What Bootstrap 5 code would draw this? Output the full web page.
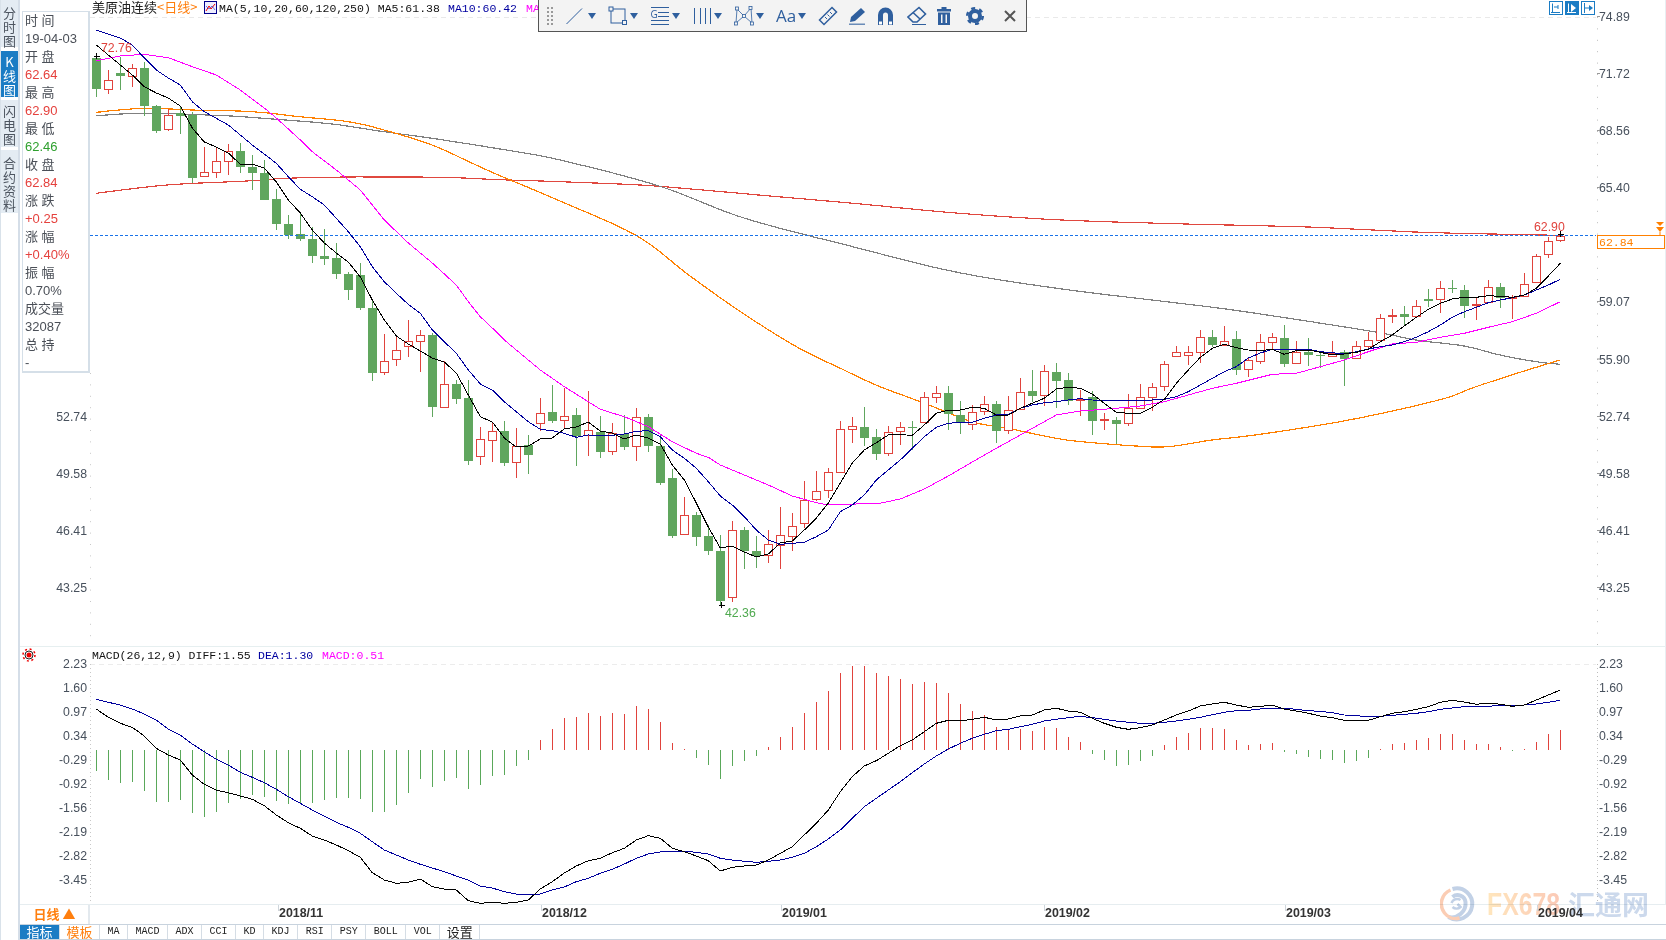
<!DOCTYPE html>
<html lang="zh-CN">
<head>
  <meta charset="UTF-8" />
  <meta name="viewport" content="width=device-width, initial-scale=1.0" />
  <title>美原油连续 日线</title>
  <link href="https://cdn.jsdelivr.net/npm/bootstrap@5.3.3/dist/css/bootstrap.min.css" rel="stylesheet"/>
  <style>
    body {
      width: 1666px;
      height: 940px;
      overflow: hidden;
      background: #fff;
      font-family: "Liberation Sans", "Noto Sans CJK SC", sans-serif;
    }
    .page-shell { height: 940px; }
    .side-col {
      width: 20px;
      flex: none;
      border-left: 1px solid #d9e2ea;
      border-right: 2px solid #d5dee8;
    }
    .side-tab {
      background: #e4ecf3;
      color: #4d5560;
      font: 13px/14px "Noto Sans CJK SC", sans-serif;
      text-align: center;
      margin-bottom: 3px;
      height: 47px;
      padding-top: 4px;
    }
    .side-tab.is-on { background: #1b7cc4; color: #fff; height: 46px; }
    .side-tab.first { padding-top: 6px; margin-bottom: 4px; }
    .side-tab.tall { height: 63px; padding-top: 6px; }
    .chart-box { height: 904px; }
    .chart-box > svg { display: block; }
    .ax { font: 12.3px "Liberation Sans", sans-serif; fill: #47505c; }
    .mono { font: 11.5px "Liberation Mono", monospace; }
    .cjk { font: 13px "Noto Sans CJK SC", sans-serif; }
    .peak { font: 12.3px "Liberation Sans", sans-serif; }

    .quote-panel {
      position: absolute;
      left: 2px;
      top: 11px;
      width: 68px;
      height: 362px;
      background: #fff;
      border: 1px solid #d5dfe8;
      border-width: 1px 2px 2px 1px;
      padding-left: 2px;
      font: 13px/18px "Liberation Sans", "Noto Sans CJK SC", sans-serif;
      color: #4a4f57;
    }
    .quote-panel .up { color: #e5413d; }
    .quote-panel .down { color: #2ea02e; }

    .draw-toolbar {
      position: absolute;
      left: 518px;
      top: 0;
      width: 489px;
      height: 32px;
      background: #f3f3f3;
      border: 1px solid #555;
      border-top: 0;
      padding-left: 8px;
    }
    .draw-toolbar svg { display: block; flex: none; }
    .grip { margin-right: 13px; }
    .tool-drop { width: 42px; flex: none; gap: 1px; }
    .tool-one { width: 29.500px; flex: none; }
    .tool-close { margin-left: 9px; }
    .caret-down {
      width: 0;
      height: 0;
      margin-left: 1px;
      border-left: 4px solid transparent;
      border-right: 4px solid transparent;
      border-top: 6px solid #2f5f9e;
    }
    .aa-mark {
      width: 20px;
      font: 17px/20px "Open Sans", sans-serif;
      color: #2f5f9e;
      white-space: nowrap;
    }
    .range-btns { position: absolute; right: 71px; top: 1px; column-gap: 2px; }

    .period-row { height: 20px; border-top: 1px solid #e6edf0; }
    .period-btn {
      width: 69px;
      margin-left: 1px;
      border: 1px solid #e3e9ee;
      border-width: 0 2px 0 0;
      color: #ff7f0e;
      font: bold 13px/18px "Noto Sans CJK SC", sans-serif;
      text-align: center;
    }
    .date-axis { position: relative; flex-grow: 1; z-index: 2; }
    .date-tag {
      position: absolute;
      top: 0;
      font: bold 12.4px/17px "Liberation Sans", sans-serif;
      color: #333;
    }
    .date-tag::before {
      content: "";
      position: absolute;
      left: -1px;
      top: 0;
      height: 6px;
      border-left: 1px solid #cfd6dc;
    }
    .ind-tabs {
      height: 16px;
      border-top: 1px solid #c8d3de;
      border-bottom: 1px solid #c8d3de;
    }
    .ind-tab {
      padding: 0 7.500px;
      border-right: 1px solid #d5dde5;
      font: 10px/14px "Liberation Mono", monospace;
      color: #222;
      height: 14px;
    }
    .ind-tab.zh { font: 13px/14px "Noto Sans CJK SC", sans-serif; padding: 0 6.500px; }
    .ind-tab.blue { background: #1b7cc4; color: #fff; }
    .ind-tab.orange { color: #ff7f0e; }
    .watermark {
      position: absolute;
      left: 1440px;
      top: 884px;
      mix-blend-mode: multiply;
      z-index: 1;
    }
  </style>
</head>
<body>
  <div class="page-shell d-flex position-relative">
    <div class="side-col">
      <div class="side-tab first">分<br>时<br>图</div>
      <div class="side-tab is-on">K<br>线<br>图</div>
      <div class="side-tab">闪<br>电<br>图</div>
      <div class="side-tab tall">合<br>约<br>资<br>料</div>
    </div>

    <div class="flex-grow-1 d-flex flex-column">
      <div class="chart-box position-relative">
        <svg id="chart" width="1646" height="904" viewBox="20 0 1646 904"></svg>

        <div class="quote-panel" id="quote"></div>

        <div class="draw-toolbar d-flex align-items-center">
          <svg class="grip" width="6" height="18" viewBox="0 0 6 18" fill="#999">
            <rect x="0" y="0" width="2" height="2"/><rect x="4" y="0" width="2" height="2"/>
            <rect x="0" y="4" width="2" height="2"/><rect x="4" y="4" width="2" height="2"/>
            <rect x="0" y="8" width="2" height="2"/><rect x="4" y="8" width="2" height="2"/>
            <rect x="0" y="12" width="2" height="2"/><rect x="4" y="12" width="2" height="2"/>
            <rect x="0" y="16" width="2" height="2"/><rect x="4" y="16" width="2" height="2"/>
          </svg>
          <div class="tool-drop d-flex align-items-center">
            <svg width="20" height="20" viewBox="0 0 20 20"><line x1="0.5" y1="18" x2="16" y2="2.5" stroke="#2f5f9e"/></svg>
            <span class="caret-down"></span>
          </div>
          <div class="tool-drop d-flex align-items-center">
            <svg width="20" height="20" viewBox="0 0 20 20" fill="#f3f3f3" stroke="#2f5f9e"><rect x="3" y="3" width="14" height="14"/><rect x="1" y="1" width="4" height="4"/><rect x="14.500" y="14.500" width="4" height="4"/></svg>
            <span class="caret-down"></span>
          </div>
          <div class="tool-drop d-flex align-items-center">
            <svg width="20" height="20" viewBox="0 0 20 20" stroke="#2f5f9e"><path d="M1 1.500h18M8 6.500h11M8 10.500h11M1 14.500h18M1 18.500h18"/><text x="0.500" y="12" fill="#2f5f9e" stroke="none" font-family="Open Sans" font-size="10">G</text></svg>
            <span class="caret-down"></span>
          </div>
          <div class="tool-drop d-flex align-items-center">
            <svg width="20" height="20" viewBox="0 0 20 20" stroke="#2f5f9e"><path d="M2.500 2v16M8.500 2v16M13.500 2v16M18.500 2v16"/></svg>
            <span class="caret-down"></span>
          </div>
          <div class="tool-drop d-flex align-items-center">
            <svg width="20" height="20" viewBox="0 0 20 20" fill="#f3f3f3" stroke="#2f5f9e" stroke-width="0.800"><path d="M3 3L10 10L17 2L18 17L10 10L2 17Z"/><rect x="1.500" y="1" width="3" height="3"/><rect x="15" y="0.500" width="3" height="3"/><rect x="8.500" y="8.500" width="3" height="3"/><rect x="0.500" y="16" width="3" height="3"/><rect x="16.500" y="16" width="3" height="3"/></svg>
            <span class="caret-down"></span>
          </div>
          <div class="tool-drop d-flex align-items-center">
            <span class="aa-mark">Aa</span>
            <span class="caret-down"></span>
          </div>
          <div class="tool-one">
            <svg width="20" height="20" viewBox="0 0 20 20" fill="none" stroke="#2f5f9e" stroke-width="1.500"><path d="M14 1.500L18.500 6L6 18.500L1.500 14Z"/><path d="M12 6l2 2M9.500 8.500l2 2M7 11l2 2" stroke-width="1"/></svg>
          </div>
          <div class="tool-one">
            <svg width="20" height="20" viewBox="0 0 20 20" fill="#2f5f9e"><path d="M13 2l4 4L7 15l-5 1 1-5z"/><rect x="1" y="17.500" width="16" height="1.500" opacity="0.700"/></svg>
          </div>
          <div class="tool-one">
            <svg width="20" height="20" viewBox="0 0 20 20"><path d="M1 19V9a7.500 7.500 0 0 1 15 0v10h-5V9a2.500 2.500 0 0 0-5 0v10z" fill="#2f5f9e"/><rect x="2" y="15.500" width="3" height="3" fill="#fff"/><rect x="12" y="15.500" width="3" height="3" fill="#fff"/></svg>
          </div>
          <div class="tool-one">
            <svg width="20" height="20" viewBox="0 0 20 20" fill="none" stroke="#2f5f9e" stroke-width="1.600"><path d="M12 1.500L18.500 8L10 16H6L1 11Z"/><path d="M6 6.500L13 13" /><path d="M5 18.500h14" stroke-width="1"/></svg>
          </div>
          <div class="tool-one">
            <svg width="20" height="20" viewBox="0 0 20 20" fill="#2f5f9e"><rect x="1" y="3" width="14" height="2.500"/><rect x="5.500" y="1" width="5" height="2.500"/><path d="M2 6.500h12v12.500H2zM5 8.500v8.500h1.500V8.500zM9.500 8.500v8.500H11V8.500z" fill-rule="evenodd"/></svg>
          </div>
          <div class="tool-one">
            <svg width="20" height="20" viewBox="0 0 20 20" fill="none" stroke="#2f5f9e"><circle cx="9" cy="10" r="5" stroke-width="4"/><circle cx="9" cy="10" r="7.800" stroke-width="2.500" stroke-dasharray="4 4.170"/></svg>
          </div>
          <div class="tool-close">
            <svg width="12" height="12" viewBox="0 0 12 12" stroke="#555" stroke-width="2"><path d="M1 1l10 10M11 1L1 11"/></svg>
          </div>
        </div>

        <div class="range-btns d-flex">
          <svg width="14" height="14" viewBox="0 0 14 14" fill="none" stroke="#1b7cc4"><rect x="0.500" y="0.500" width="13" height="13"/><path d="M3.500 2.500v9M2 11.500h9M9 4v4M5 6h4"/></svg>
          <svg width="14" height="14" viewBox="0 0 14 14"><rect width="14" height="14" fill="#1b7cc4"/><path d="M3.500 2.500v9M2 11.500h9" stroke="#fff" fill="none"/><path d="M6 3l5 4-5 4z" fill="#fff"/></svg>
          <svg width="14" height="14" viewBox="0 0 14 14" fill="none" stroke="#1b7cc4"><rect x="0.500" y="0.500" width="13" height="13"/><path d="M3.500 2v10M3.500 7h6"/><path d="M8 4l4 3-4 3z" fill="#1b7cc4" stroke="none"/></svg>
        </div>
      </div>

      <div class="period-row d-flex">
        <div class="period-btn">日线 ▲</div>
        <div class="date-axis" id="dates"></div>
      </div>

      <div class="ind-tabs d-flex" id="indTabs"></div>
    </div>

    <svg class="watermark" width="215" height="40" viewBox="1440 884 215 40">
      <defs>
        <linearGradient id="wm" x1="0" x2="1" y1="0" y2="0"><stop offset="0" stop-color="#ffe6bd"/><stop offset="1" stop-color="#fbc9b6"/></linearGradient>
      </defs>
      <g transform="translate(1456.500 904)">
        <path d="M-4 -15A15.500 15.500 0 1 1 -8 13A14 14 0 0 0 9 -2A8 8 0 0 0 -4 -7" fill="none" stroke="#c2d1e6" stroke-width="4"/>
        <path d="M-6 -14A15 15 0 0 0 -12 9A14 14 0 0 0 3 14" fill="none" stroke="#fbcdb4" stroke-width="3.500"/>
        <path d="M-5 -1a6 6 0 0 1 9 -3M-4 3a6 6 0 0 0 8 0l-3 -3" fill="none" stroke="#c2d1e6" stroke-width="2.500"/>
      </g>
      <text x="1487" y="915" fill="url(#wm)" font-family="Liberation Sans" font-weight="bold" font-size="32" textLength="73" lengthAdjust="spacingAndGlyphs">FX678</text>
      <text x="1568" y="915" fill="#ccd9ec" font-family="Noto Sans CJK SC" font-weight="bold" font-size="27">汇通网</text>
    </svg>
  </div>

  <script>
    // main chart: every y is page pixels, bars sit 12px apart starting at x=96.3
    const X0 = 96.3, STEP = 12;
    const xOf = i => X0 + STEP * i;

    const g = "g", r = "r";
    const candles = [
      [g,55,58,89,97],[r,70,80.3,88.7,93.7],[g,56.7,73,75.7,90],[r,64,68.3,75.7,86.7],[g,62,68,105.7,115.7],
      [g,105,106,130.7,132.7],[r,109,115.3,128.7,130.7],[g,107,113.3,115.7,134],[g,112.3,114.7,177.7,182.7],[r,147,172.3,175.7,176.7],
      [r,147.3,161.3,172.3,177.7],[r,144,150.7,161.3,174.7],[g,143,151,166.7,173],[g,155,167,173,189.7],[g,160,173,199.7,200],
      [g,189,199,223.7,230],[g,215,224,235.3,239],[g,212.3,234,238.7,240.7],[g,226.7,239,256,262.7],[g,229,256,258.7,265],
      [g,243.3,258,273.7,278.7],[g,272.3,274,289.7,299.7],[g,263.3,275,307.7,309.7],[g,300,308,372.7,380.7],[r,334,360.7,372.3,374.7],
      [r,335,350.3,358.7,365.7],[r,320,341.3,345.7,356.7],[r,330,335.3,340.7,372],[g,333.3,335,407,417],[r,361.3,384.3,406.7,406.7],
      [g,380,384,398.7,404],[g,380,398,460.7,465],[r,427,439.3,456.3,465],[r,423.3,431.3,439.7,462],[g,421,431,462.7,466],
      [r,428,446.3,462.3,478],[g,435,445,454.7,474],[r,398,413.3,423.3,430.7],[g,385,412,420.7,422.7],[r,388,416.3,420.3,428.7],
      [g,408,415,436.3,465.7],[r,391.3,430.3,435.3,456],[g,416,432,451.7,458],[r,423,433.3,451.3,454.7],[g,415,434,446.7,449.7],
      [r,408,417.3,446.3,460.7],[g,414,417,445.7,451.7],[g,434,446,482.7,484.7],[g,469,478,535.7,537.7],[r,497,515.3,534.3,534.3],
      [g,512,515,536.7,546],[g,525,536,550.7,554.7],[g,535,551,600.7,605],[r,521,530.3,596.7,601.7],[g,527,530,551,569],
      [g,536,551,556,567.7],[r,530,544.3,554.7,562.7],[r,507,535.3,544.7,569],[r,513,526.3,535.7,550.7],[r,481,499.7,523.3,528],
      [r,471,491.3,498.7,501],[r,468,472.3,490.3,498.3],[r,421,429.3,471.7,472.7],[r,417,426.3,428.7,443],[g,407,427,438,446],
      [g,429,437,454,460],[r,426,432.3,453.3,455.7],[r,422,426.7,431.3,445],[g,421,427,428,450],[r,392,396.7,422,423.3],
      [r,386,392.7,396.7,403],[g,386,393,413.7,430],[g,401,415,423.3,434],[r,405.3,411.7,423.7,430],[r,396,404.3,410.7,415],
      [g,401,404,430.7,442.7],[r,396,410.3,429.7,434],[r,378,392.3,409.3,410.3],[g,370,391,396,402],[r,365,371.3,395.3,406],
      [g,363,372,381,408],[g,373,380,401,405],[r,390,398.7,400.3,416],[g,391,397,421,435],[r,413,419,420.3,430],
      [g,417.3,420,424,444],[r,394,408.3,423.3,426],[r,384,397.3,407.7,408.3],[r,383,387.3,396.7,411],[r,361,364.3,386.3,391],
      [r,346,352.3,356.3,356.7],[r,346,352.3,354.7,365],[r,330,337.3,352.3,363],[g,330,337,345,347],[r,326,341.3,345,346],
      [g,331,339,370,375],[r,357,360.3,369.3,377],[r,334,342.3,360.7,363.7],[r,333.3,337.3,341.7,350],[g,325,338,363.7,367],
      [r,341.3,352.3,362.7,362.7],[g,338,352,355,366],[g,351.7,354.7,355.7,367.7],[r,341.3,353,355.7,356.7],[g,350.3,352.3,359,385.7],
      [r,341.3,346.3,358.3,359],[r,331.7,340.3,345.7,350],[r,314,318.3,339.7,340],[r,309.3,314.7,316.3,322.7],[g,306,314,316.7,326],
      [r,300,306.3,315.7,318.3],[g,289,299.3,300.7,307.3],[r,281,288.3,299.3,313],[g,280,288,289.3,293],[g,285,290,306,318],
      [r,298,304,305.3,320],[r,280,287.3,302.3,303.3],[g,283,287,298,308],[r,295,296.7,297.3,319],[r,273,284.3,295.7,296.3],
      [r,254,256.3,282.3,283],[r,237.3,241.3,254.3,257.7],[r,232.7,236.3,239.7,241.7]
    ];

    const ma5 = [45,55,65,75,86.7,93,98,106,128,142,147,153,164.3,164.3,168,182,200,213,230,243,253,262,277,300,320,336,344,351,358,362,
      373,395,416.7,422,438,447,446,439,438,429,427,422,431,433,439,435,438,444,465,480,503,527,548,546,552,557,554,543,541,530,518,503,483,463,
      450,442.7,435,434.7,435.3,425,413.3,410,410,407.3,408.3,415,415,408.3,403.3,398.3,389,387.3,388.3,394,403.3,412.3,413.3,413.3,407.3,399.3,383.3,370,357.3,348.3,344.3,347.7,
      350,350.7,349.3,354.3,350.7,350,352.3,355,354,352.3,349.3,341.7,335,326,317.3,309.3,303.3,299,297.3,297.3,295.7,296.3,297.3,295,288.3,276,263.3];
    const ma10 = [30,34,38,45,58,70,78,85,101.7,111.7,118.3,125,135,145,154,163.3,176.7,189.3,196.7,205,218.3,231.7,246.7,266.7,281.7,293.3,304.3,313.3,330,341.7,353.3,370,
      384,390,401.7,411.7,421.7,429.3,430.7,433.3,437.3,435,435.3,435.3,434,431.3,430.7,436.7,450,458.3,468.3,481.7,496,505,516.7,530,540,544.3,543.3,542.3,536.7,530,511.7,505,495,480,
      470,460,448.3,436.7,427.3,423.3,422.3,422.3,418.3,415,414.3,408.3,405,402.7,401.7,400,398.7,400,400.7,400.3,400.3,400.3,400,399.3,396.7,391.7,385,378.3,371.7,366.7,358,353,
      349.3,349.3,349.3,349.3,351.7,352.7,354,351.7,349,346.7,345,341.7,337.3,331.7,325,317.3,311.7,307.3,302.7,300,297.7,295,290,285,279.3];
    const ma20 = [[0,60.7],[2,56],[4,54.3],[6,57.7],[8,66.7],[10,75],[12,90],[14,108],[15,118],[17,140],[18,151.7],[20,170],[22,190],[23,205],[24,220],[26,243],[28,263],[30,285],[31,301.7],[32,316.7],[33,328],[34,340],[35,350],[36,360],
      [37,370],[39,386.7],[41,401.7],[42,409.3],[44,416.7],[46,426.7],[48,441.7],[50,453.3],[51,457.3],[52,465],[54,475],[56,485],[58,496],[60,502.7],[61,505],[63,504.3],[64,503.3],[65,504],[67,499],[69,489],[71,476],[73,462],
      [75,448.3],[77,435],[79,421.7],[80,415],[82,411],[85,408.3],[87,406],[89,401.7],[91,395],[93,388.3],[95,383.3],[97,377.3],[98,374.3],[100,373.3],[102,366.7],[104,360],[106,351.7],[108,344],[110,342.3],[112,337.3],[114,333.3],[116,327.3],[118,321.7],[120,313.3],[122,301.7]];
    // the long averages are given by page x, not by bar
    const ma60 = [[96,112.3],[144,108.3],[192,110],[252,111.7],[300,116.7],[348,121.7],[384,130],[432,145],[476,165],[500,175.7],[560,201],[637,236],[690,276],[744,314],[797,347],[844,370],[880,386.7],[924,403],[972,421.7],[1008,428.3],[1056,438.3],[1088,442.3],[1136,446],[1168,446.7],[1212,440],[1260,434.3],[1349,420],[1439,400],[1473,387.7],[1517,373.3],[1560,360]];
    const ma120 = [[96,115.7],[144,113.3],[224,115.7],[276,119.3],[332,124],[384,131.7],[432,138.3],[500,149],[560,160],[659,186],[744,218],[850,246],[956,272],[1062,289],[1169,302],[1240,311],[1368,330.7],[1416,340],[1464,346],[1500,355],[1536,361.7],[1560,364.3]];
    const ma250 = [[96,193.3],[167,185],[247,181],[287,178.3],[347,177],[439,177.3],[500,179.7],[560,181.7],[640,185],[691,189],[770,196],[850,203],[956,213],[1062,220],[1169,223.5],[1240,225.3],[1315,227.3],[1423,232.3],[1507,234.3],[1560,235.3]];

    // macd numbers are read at 3x from y=640, 329 is the zero line
    const macdBars = [392,419,428,425,452,485,485,479,518,530,515,488,476,465,470,482,491,488,488,479,473,473,476,515,515,494,458,416,440,422,413,446,434,407,404,377,359,300,267,
      234,231,219,228,219,222,198,207,246,309,328,353,374,416,377,362,347,321,291,261,219,186,153,99,78,78,99,108,117,132,126,129,159,192,213,225,261,267,267,273,261,264,291,306,
      342,360,378,375,363,348,315,291,279,264,264,267,300,315,312,309,336,342,351,357,360,369,363,354,327,312,309,300,294,282,282,300,312,312,321,333,327,306,282,270];
    const diff = [207,232,250,262,288,325,345,360,405,433,451,458,468,478,497,525,548,565,588,600,615,632,652,698,720,730,727,717,740,747,750,782,790,787,790,787,780,747,725,699,678,662,655,638,625,600,587,595,625,635,648,662,693,682,678,675,660,640,620,585,550,510,455,410,378,362,340,317,300,275,250,241,243,238,232,240,237,228,225,210,205,213,217,235,250,262,268,263,255,240,225,213,198,192,187,195,202,199,196,207,213,220,228,233,241,241,241,230,220,215,208,200,187,181,186,193,189,193,199,195,180,165,150];
    const dea = [178,187,195,207,222,240,267,285,312,335,358,375,397,412,428,448,470,490,510,528,547,562,580,605,630,645,660,673,684,695,708,720,738,744,755,762,765,762,750,741,725,715,700,688,672,655,642,636,634,634,637,642,655,660,664,667,664,660,652,640,620,597,570,535,500,475,450,425,398,372,348,327,310,295,283,272,268,260,253,243,238,233,229,233,238,243,247,250,250,247,243,238,232,224,217,212,211,207,205,205,208,212,214,218,225,227,230,229,226,223,220,215,208,204,200,199,199,196,195,195,192,187,181];

    const RED = "#e0433d", GREEN = "#60a65e";
    const poly = (pts, color, w = 1) => `<polyline points="${pts.map(p => p[0].toFixed(1) + "," + p[1].toFixed(1)).join(" ")}" fill="none" stroke="${color}" stroke-width="${w}" shape-rendering="crispEdges"/>`;
    const byBar = arr => arr.map((y, i) => [xOf(i), y]);
    const macdY = v => 640 + v / 3;

    // catmull-rom through the sparse points of the slow averages
    function smooth(pts) {
      const out = [];
      for (let i = 0; i < pts.length - 1; i++) {
        const p0 = pts[Math.max(i - 1, 0)], p1 = pts[i], p2 = pts[i + 1], p3 = pts[Math.min(i + 2, pts.length - 1)];
        const n = Math.ceil((p2[0] - p1[0]) / 6);
        for (let k = 0; k < n; k++) {
          const t = k / n, t2 = t * t, t3 = t2 * t;
          out.push([0, 1].map(a => 0.5 * (2 * p1[a] + (p2[a] - p0[a]) * t + (2 * p0[a] - 5 * p1[a] + 4 * p2[a] - p3[a]) * t2 + (3 * p1[a] - p0[a] - 3 * p2[a] + p3[a]) * t3)));
        }
      }
      out.push(pts[pts.length - 1]);
      return out;
    }

    function drawChart() {
      let s = "";

      // grid and panes
      s += `<line x1="90" y1="17.500" x2="1596" y2="17.500" stroke="#e9e9e9" stroke-dasharray="5 4"/>`;
      s += `<line x1="20" y1="646.500" x2="1666" y2="646.500" stroke="#e6eff0"/>`;
      s += `<line x1="90" y1="664.500" x2="1596" y2="664.500" stroke="#ececec" stroke-dasharray="5 4"/>`;
      s += `<line x1="1597.500" y1="17" x2="1597.500" y2="646" stroke="#bcbcbc" stroke-dasharray="1 10.400"/>`;
      s += `<line x1="1597.500" y1="664" x2="1597.500" y2="904" stroke="#bcbcbc" stroke-dasharray="1 3"/>`;
      s += `<line x1="90.500" y1="373" x2="90.500" y2="646" stroke="#c8c8c8" stroke-dasharray="1 10.400"/>`;
      s += `<line x1="90.500" y1="664" x2="90.500" y2="904" stroke="#c8c8c8" stroke-dasharray="1 3"/>`;
      s += `<line x1="1665.500" y1="0" x2="1665.500" y2="904" stroke="#e8eef2"/>`;

      // y axis labels
      const right = [["74.89",16.5],["71.72",73.5],["68.56",130.5],["65.40",187.5],["59.07",301.5],["55.90",359],["52.74",416.5],["49.58",473.5],["46.41",530.5],["43.25",587.5]];
      const left = right.slice(6);
      const macdLabels = ["2.23","1.60","0.97","0.34","-0.29","-0.92","-1.56","-2.19","-2.82","-3.45"];
      right.forEach(a => {
        s += `<text class="ax" x="1599" y="${a[1] + 4.5}">${a[0]}</text><line x1="1597" x2="1600" y1="${a[1]}" y2="${a[1]}" stroke="#999"/>`;
      });
      left.forEach(a => {
        s += `<text class="ax" x="87" y="${a[1] + 4.5}" text-anchor="end">${a[0]}</text>`;
      });
      macdLabels.forEach((t, i) => {
        const y = 664 + i * 24;
        s += `<text class="ax" x="87" y="${y + 3.5}" text-anchor="end">${t}</text>`;
        s += `<text class="ax" x="1599" y="${y + 3.5}">${t}</text>`;
      });

      // titles
      s += `<text x="92" y="12" class="cjk" fill="#222">美原油连续<tspan fill="#ff7f0e">&lt;日线&gt;</tspan></text>`;
      s += `<rect x="204.500" y="1.500" width="12" height="12" fill="#eef" stroke="#00008b"/><path d="M206 11l3-5 2 3 4-5" fill="none" stroke="#e00"/><path d="M206 6l3 3 3-3 3 4" fill="none" stroke="#3344cc" stroke-width="0.700"/>`;
      s += `<text x="219" y="12" class="mono" fill="#111" xml:space="preserve">MA(5,10,20,60,120,250) MA5:61.38</text>`;
      s += `<text x="448" y="12" class="mono" fill="#0000a0">MA10:60.42</text>`;
      s += `<text x="526" y="12" class="mono" fill="#f0f">MA20</text>`;
      s += `<text x="92" y="659" class="mono" fill="#111" xml:space="preserve">MACD(26,12,9) DIFF:1.55</text>`;
      s += `<text x="258" y="659" class="mono" fill="#0000a0">DEA:1.30</text>`;
      s += `<text x="322" y="659" class="mono" fill="#f0f">MACD:0.51</text>`;

      // alert icon next to the macd title
      s += `<circle cx="29" cy="655" r="2.500" fill="#e00"/><circle cx="29" cy="655" r="4" fill="none" stroke="#222"/><circle cx="29" cy="655" r="6" fill="none" stroke="#e00" stroke-width="1.500" stroke-dasharray="2 2.700"/>`;

      // averages behind the candles
      s += poly(smooth(ma250), "#e0483f", 1.2);
      s += poly(smooth(ma120), "#808080", 1.2);
      s += poly(smooth(ma60), "#ff8000", 1.2);

      candles.forEach((c, i) => {
        const x = Math.round(xOf(i));
        const col = c[0] === g ? GREEN : RED;
        s += `<line x1="${x + .5}" x2="${x + .5}" y1="${c[1]}" y2="${c[4]}" stroke="${col}" shape-rendering="crispEdges"/>`;
        if (c[0] === g) {
          s += `<rect x="${x - 4}" y="${c[2]}" width="9" height="${Math.max(c[3] - c[2], 1)}" fill="${col}" shape-rendering="crispEdges"/>`;
        } else {
          const t = Math.round(c[2]), b = Math.round(c[3]);
          s += `<rect x="${x - 3.5}" y="${t + .5}" width="8" height="${Math.max(b - t, 1)}" fill="#fff" stroke="${col}" shape-rendering="crispEdges"/>`;
        }
      });

      s += `<line x1="90" x2="1596" y1="235.500" y2="235.500" stroke="#1a73e8" stroke-dasharray="3 2"/>`;
      s += poly(ma20.map(p => [xOf(p[0]), p[1]]), "#f0f");
      s += poly(byBar(ma10), "#00009c");
      s += poly(byBar(ma5), "#000");

      // extremes
      s += `<text class="peak" x="101" y="52" fill="#e0433d">72.76</text>`;
      s += `<text class="peak" x="1534" y="231" fill="#e0433d">62.90</text>`;
      s += `<text class="peak" x="725" y="617" fill="#4fa94f">42.36</text>`;
      [[96.500,56],[721.500,605],[1560.500,234]].forEach(p => {
        s += `<path d="M${p[0] - 3} ${p[1]}h6M${p[0]} ${p[1] - 3}v6" stroke="#000" shape-rendering="crispEdges"/>`;
      });

      // last price tag
      s += `<rect x="1597.500" y="235.500" width="67" height="13" fill="#fff" stroke="#ff8000"/>`;
      s += `<text x="1599" y="246" class="mono" fill="#ff8000" xml:space="preserve">62.84</text>`;
      s += `<path d="M1656 222h8l-4 4zM1656 227h8l-4 5z" fill="#ff8000"/>`;
      s += `<line x1="1660" y1="232" x2="1660" y2="235" stroke="#ff8000"/>`;

      // macd pane
      macdBars.forEach((v, i) => {
        const x = Math.round(xOf(i));
        const col = v > 329 ? "#5aa85a" : RED;
        s += `<line x1="${x + .5}" x2="${x + .5}" y1="${macdY(329)}" y2="${macdY(v)}" stroke="${col}" shape-rendering="crispEdges"/>`;
      });
      s += poly(dea.map((v, i) => [xOf(i), macdY(v)]), "#00009c");
      s += poly(diff.map((v, i) => [xOf(i), macdY(v)]), "#000");

      document.getElementById("chart").innerHTML = s;
    }

    function drawQuote() {
      const rows = [["时 间",""],["19-04-03",""],["开 盘",""],["62.64","up"],["最 高",""],["62.90","up"],["最 低",""],["62.46","down"],["收 盘",""],["62.84","up"],["涨 跌",""],["+0.25","up"],["涨 幅",""],["+0.40%","up"],["振 幅",""],["0.70%",""],["成交量",""],["32087",""],["总 持",""],["-",""]];
      document.getElementById("quote").innerHTML = rows.map(r => `<div class="${r[1]}">${r[0]}</div>`).join("");
    }

    function drawBottom() {
      const dates = [["2018/11",279],["2018/12",542],["2019/01",782],["2019/02",1045],["2019/03",1286],["2019/04",1538]];
      // date-axis starts at page x=90
      document.getElementById("dates").innerHTML = dates.map(d => `<span class="date-tag" style="left:${d[1] - 90}px">${d[0]}</span>`).join("");
      const tabs = ["MA","MACD","ADX","CCI","KD","KDJ","RSI","PSY","BOLL","VOL"];
      document.getElementById("indTabs").innerHTML =
        `<div class="ind-tab zh blue">指标</div><div class="ind-tab zh orange">模板</div>` +
        tabs.map(t => `<div class="ind-tab">${t}</div>`).join("") +
        `<div class="ind-tab zh">设置</div>`;
    }

    document.addEventListener("DOMContentLoaded", function () {
      drawChart();
      drawQuote();
      drawBottom();
    });
  </script>
  <script src="https://cdn.jsdelivr.net/npm/bootstrap@5.3.3/dist/js/bootstrap.bundle.min.js"></script>
</body>
</html>
